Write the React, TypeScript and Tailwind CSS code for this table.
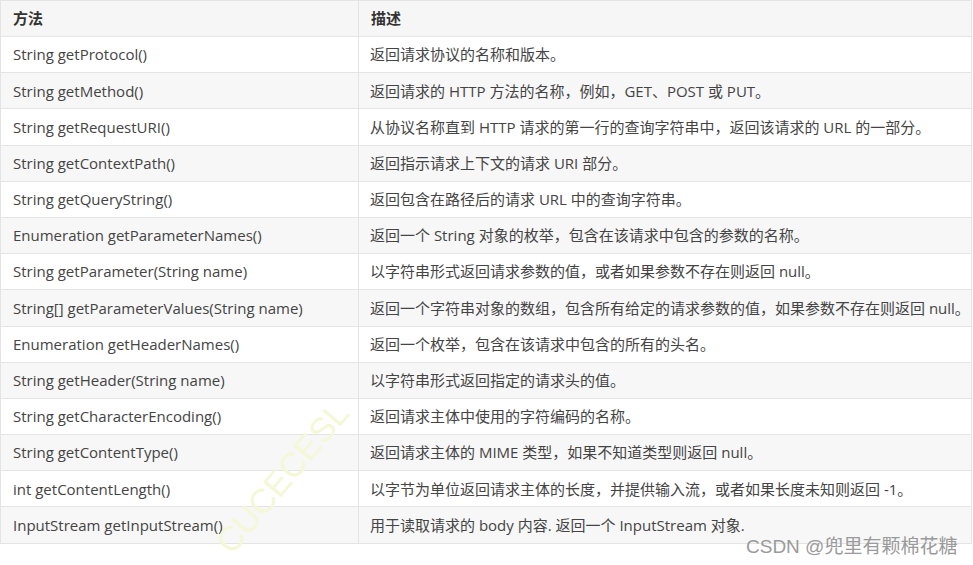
const rows: [string, string][] = [
  ["String getProtocol()", "返回请求协议的名称和版本。"],
  ["String getMethod()", "返回请求的 HTTP 方法的名称，例如，GET、POST 或 PUT。"],
  ["String getRequestURI()", "从协议名称直到 HTTP 请求的第一行的查询字符串中，返回该请求的 URL 的一部分。"],
  ["String getContextPath()", "返回指示请求上下文的请求 URI 部分。"],
  ["String getQueryString()", "返回包含在路径后的请求 URL 中的查询字符串。"],
  ["Enumeration getParameterNames()", "返回一个 String 对象的枚举，包含在该请求中包含的参数的名称。"],
  ["String getParameter(String name)", "以字符串形式返回请求参数的值，或者如果参数不存在则返回 null。"],
  ["String[] getParameterValues(String name)", "返回一个字符串对象的数组，包含所有给定的请求参数的值，如果参数不存在则返回 null。"],
  ["Enumeration getHeaderNames()", "返回一个枚举，包含在该请求中包含的所有的头名。"],
  ["String getHeader(String name)", "以字符串形式返回指定的请求头的值。"],
  ["String getCharacterEncoding()", "返回请求主体中使用的字符编码的名称。"],
  ["String getContentType()", "返回请求主体的 MIME 类型，如果不知道类型则返回 null。"],
  ["int getContentLength()", "以字节为单位返回请求主体的长度，并提供输入流，或者如果长度未知则返回 -1。"],
  ["InputStream getInputStream()", "用于读取请求的 body 内容. 返回一个 InputStream 对象."],
];

export default function App() {
  return (
    <div
      className="relative w-[973px] h-[565px] overflow-hidden bg-white text-[15px] text-[#444]"
      style={{ fontFamily: '"Open Sans", "Noto Sans CJK SC", sans-serif' }}
    >
      <table className="w-[972px] border-collapse table-fixed">
        <colgroup>
          <col className="w-[358px]" />
          <col />
        </colgroup>
        <thead>
          <tr className="h-[36px] bg-[#f6f6f6]">
            <th className="border border-[#e4e4e4] pl-3 text-left font-bold text-[#333]">方法</th>
            <th className="border border-[#e4e4e4] pl-3 text-left font-bold text-[#333]">描述</th>
          </tr>
        </thead>
        <tbody>
          {rows.map(([m, d], i) => (
            <tr key={m} className={i % 2 === 1 ? "h-[36.2px] bg-[#f7f7f7]" : "h-[36.2px] bg-white"}>
              <td className="border border-[#e4e4e4] pl-3 whitespace-nowrap">{m}</td>
              <td className="border border-[#e4e4e4] pl-[11px] whitespace-nowrap">{d}</td>
            </tr>
          ))}
        </tbody>
      </table>

      {/* faint diagonal watermark */}
      <div
        className="absolute left-[190px] top-[452px] -rotate-[50deg] text-[34px] text-[#f5f8d6] select-none pointer-events-none"
        style={{ fontFamily: '"Liberation Sans", sans-serif' }}
      >
        CUCECESL
      </div>

      <div
        className="absolute left-[746px] top-[534px] text-[19px] leading-[26px] text-[#9a9a9a]"
        style={{ fontFamily: '"Liberation Sans", "Noto Sans CJK SC", sans-serif' }}
      >
        CSDN @兜里有颗棉花糖
      </div>
    </div>
  );
}
